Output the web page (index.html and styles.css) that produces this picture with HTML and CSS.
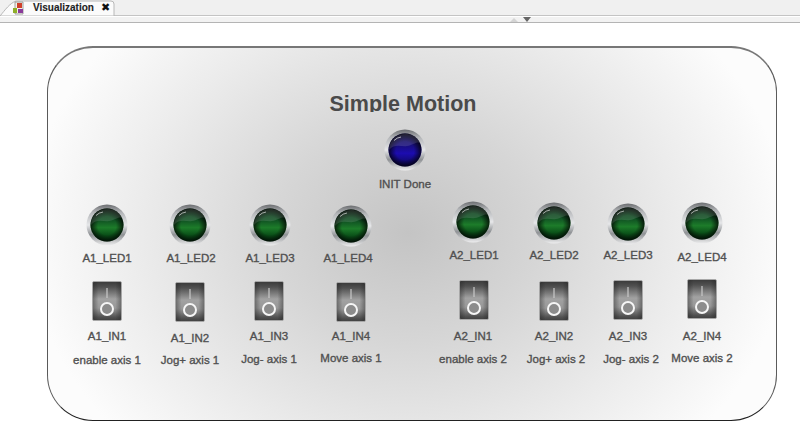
FILE: index.html
```html
<!DOCTYPE html>
<html lang="en">
<head>
<meta charset="utf-8">
<title>Visualization</title>
<link rel="stylesheet" href="styles.css">
</head>
<body>
<svg width="0" height="0" class="defs">
  <defs>
    <linearGradient id="bezel" x1="0" y1="0" x2="0" y2="1">
      <stop offset="0" stop-color="#6c6e71"/><stop offset=".2" stop-color="#b4b6b9"/><stop offset=".5" stop-color="#e6e7e9"/><stop offset=".74" stop-color="#8f9295"/><stop offset="1" stop-color="#eeeeef"/>
    </linearGradient>
    <linearGradient id="green" x1="0" y1="0" x2="0" y2="1">
      <stop offset="0" stop-color="#082c14"/><stop offset=".34" stop-color="#0f4f22"/><stop offset=".58" stop-color="#1d7c2a"/><stop offset=".8" stop-color="#0a5018"/><stop offset="1" stop-color="#052f10"/>
    </linearGradient>
    <linearGradient id="blue" x1="0" y1="0" x2="0" y2="1">
      <stop offset="0" stop-color="#0e0a50"/><stop offset=".34" stop-color="#180e78"/><stop offset=".6" stop-color="#1c0cb0"/><stop offset=".82" stop-color="#130a7c"/><stop offset="1" stop-color="#0c0650"/>
    </linearGradient>
    <radialGradient id="vign" cx=".5" cy=".52" r=".5">
      <stop offset=".55" stop-color="#000" stop-opacity="0"/><stop offset="1" stop-color="#000" stop-opacity=".75"/>
    </radialGradient>
    <linearGradient id="rocker" x1="0" y1="0" x2="0" y2="1">
      <stop offset="0" stop-color="#3a3a3a"/><stop offset=".14" stop-color="#505050"/><stop offset=".45" stop-color="#a2a2a2"/><stop offset=".68" stop-color="#989898"/><stop offset=".92" stop-color="#505050"/><stop offset="1" stop-color="#404040"/>
    </linearGradient>
    <linearGradient id="rocker-side" x1="0" y1="0" x2="1" y2="0">
      <stop offset="0" stop-color="#222" stop-opacity=".4"/><stop offset=".2" stop-color="#222" stop-opacity="0"/><stop offset=".8" stop-color="#222" stop-opacity="0"/><stop offset="1" stop-color="#222" stop-opacity=".4"/>
    </linearGradient>
    <symbol id="led-green" viewBox="0 0 42 42">
      <circle cx="21" cy="21" r="20.5" fill="url(#bezel)"/>
      <circle cx="21" cy="21" r="16.5" fill="url(#green)"/>
      <circle cx="21" cy="21" r="16.5" fill="url(#vign)"/>
      <path d="M5 21C11 14 17 18 23 17C29 16 33 12 36 14C33 7 27 5 21 5C12 5 5 12 5 21Z" fill="#fff" opacity=".13"/>
      <path d="M10 11.5Q13 8.5 17 8" stroke="#fff" stroke-width="1" fill="none" opacity=".6"/>
    </symbol>
    <symbol id="led-blue" viewBox="0 0 42 42">
      <circle cx="21" cy="21" r="20.5" fill="url(#bezel)"/>
      <circle cx="21" cy="21" r="16.5" fill="url(#blue)"/>
      <circle cx="21" cy="21" r="16.5" fill="url(#vign)"/>
      <path d="M5 21C11 14 17 18 23 17C29 16 33 12 36 14C33 7 27 5 21 5C12 5 5 12 5 21Z" fill="#fff" opacity=".13"/>
      <path d="M10 11.5Q13 8.5 17 8" stroke="#fff" stroke-width="1" fill="none" opacity=".65"/>
    </symbol>
    <symbol id="switch" viewBox="0 0 30 40">
      <rect x=".5" y=".5" width="29" height="39" rx="1.5" fill="url(#rocker)" stroke="#a8a8a8" stroke-width="1"/>
      <rect x="1" y="1" width="28" height="38" fill="url(#rocker-side)"/>
      <rect x="14.4" y="7" width="1.2" height="10" fill="#c8c8c8"/>
      <circle cx="15" cy="28" r="6" fill="#8c8c8c" stroke="#f6f6f6" stroke-width="2"/>
    </symbol>
  </defs>
</svg>
<header class="tabbar">
  <svg class="tab-shape" viewBox="0 0 116 16" width="116" height="16">
    <path d="M0 16C5 10 10 3 16 1H111Q114 1 114 4V16Z" fill="#fbfbfb" stroke="#b8b8b8" stroke-width="1"/>
  </svg>
  <div class="tab">
    <svg class="tab-icon" viewBox="0 0 14 14" width="14" height="14">
      <path d="M3 1H11V13H3Z" fill="#f4f1e8" stroke="#8a8a8a" stroke-width=".8"/>
      <rect x="1" y="7" width="4" height="5" fill="#8fae2a"/>
      <rect x="5" y="2" width="5" height="5" fill="#d0402a"/>
      <rect x="6" y="8" width="5" height="4" fill="#8a3a9a"/>
    </svg>
    <span class="tab-title">Visualization</span>
    <span class="tab-close">✖</span>
  </div>
</header>
<div class="splitter">
  <span class="arrow-up"></span>
  <span class="arrow-down"></span>
</div>
<main class="canvas">
  <section class="panel"></section>
  <h1 class="title">Simple Motion</h1>

  <svg class="led led-c"><use href="#led-blue"/></svg>
  <span class="lbl lbl-init">INIT Done</span>

  <svg class="led l1"><use href="#led-green"/></svg><span class="lbl t-l1">A1_LED1</span>
  <svg class="led l2"><use href="#led-green"/></svg><span class="lbl t-l2">A1_LED2</span>
  <svg class="led l3"><use href="#led-green"/></svg><span class="lbl t-l3">A1_LED3</span>
  <svg class="led l4"><use href="#led-green"/></svg><span class="lbl t-l4">A1_LED4</span>
  <svg class="led l5"><use href="#led-green"/></svg><span class="lbl t-l5">A2_LED1</span>
  <svg class="led l6"><use href="#led-green"/></svg><span class="lbl t-l6">A2_LED2</span>
  <svg class="led l7"><use href="#led-green"/></svg><span class="lbl t-l7">A2_LED3</span>
  <svg class="led l8"><use href="#led-green"/></svg><span class="lbl t-l8">A2_LED4</span>

  <svg class="sw s1"><use href="#switch"/></svg><span class="lbl t-s1">A1_IN1</span><span class="cap c1">enable axis 1</span>
  <svg class="sw s2"><use href="#switch"/></svg><span class="lbl t-s2">A1_IN2</span><span class="cap c2">Jog+ axis 1</span>
  <svg class="sw s3"><use href="#switch"/></svg><span class="lbl t-s3">A1_IN3</span><span class="cap c3">Jog- axis 1</span>
  <svg class="sw s4"><use href="#switch"/></svg><span class="lbl t-s4">A1_IN4</span><span class="cap c4">Move axis 1</span>
  <svg class="sw s5"><use href="#switch"/></svg><span class="lbl t-s5">A2_IN1</span><span class="cap c5">enable axis 2</span>
  <svg class="sw s6"><use href="#switch"/></svg><span class="lbl t-s6">A2_IN2</span><span class="cap c6">Jog+ axis 2</span>
  <svg class="sw s7"><use href="#switch"/></svg><span class="lbl t-s7">A2_IN3</span><span class="cap c7">Jog- axis 2</span>
  <svg class="sw s8"><use href="#switch"/></svg><span class="lbl t-s8">A2_IN4</span><span class="cap c8">Move axis 2</span>
</main>
</body>
</html>
```
FILE: styles.css
```css
html, body { margin: 0; padding: 0; width: 800px; height: 439px; overflow: hidden; background: #fff; font-family: "Liberation Sans", Arial, sans-serif; }
.defs { position: absolute; }
.tabbar { height: 15px; background: #f0f0f0; border-bottom: 1px solid #c4c4c4; position: relative; }
.tab-shape { position: absolute; left: 0; top: 0; }
.tab { position: absolute; left: 6px; top: 0; width: 108px; height: 15px; display: flex; align-items: center; padding-left: 6px; box-sizing: border-box; }
.tab-icon { flex: none; }
.tab-title { font-size: 10px; font-weight: bold; color: #222; margin-left: 7px; line-height: 15px; -webkit-text-stroke: .1px #222; }
.tab-close { font-size: 11px; color: #111; margin-left: 7px; line-height: 15px; }
.splitter { height: 5px; background: #f2f2f2; border-bottom: 1px solid #b4b4b4; position: relative; margin-top: 1px; }
.arrow-up { position: absolute; left: 510px; top: 1px; width: 0; height: 0; border-left: 4px solid transparent; border-right: 4px solid transparent; border-bottom: 4px solid #d4d4d4; }
.arrow-down { position: absolute; left: 523px; top: 0; width: 0; height: 0; border-left: 4px solid transparent; border-right: 4px solid transparent; border-top: 5px solid #666; }
.canvas { position: absolute; left: 0; top: 0; width: 800px; height: 439px; }
.panel { position: absolute; left: 47px; top: 46px; width: 730px; height: 375px; box-sizing: border-box; border: 1px solid #5a5a5a; border-top: 2px solid #777; border-bottom-color: #222; border-radius: 46px; background: radial-gradient(ellipse 380px 310px at 360px 185px, #c4c4c4 0%, #d6d6d6 35%, #ebebeb 70%, #fcfcfc 100%); }
.title { position: absolute; left: 303px; top: 92px; width: 200px; height: 20px; overflow: hidden; margin: 0; text-align: center; font-size: 21.5px; line-height: 24px; font-weight: bold; color: #4a4a4a; }
.led { position: absolute; width: 42px; height: 42px; }
.sw { position: absolute; width: 30px; height: 40px; }
.lbl, .cap { position: absolute; width: 100px; margin-left: -50px; text-align: center; color: #505050; font-size: 11.5px; line-height: 14px; white-space: nowrap; -webkit-text-stroke: .35px #505050; }
.led-c { left: 384px; top: 129px; }
.lbl-init { left: 405px; top: 177px; }
.l1 { left: 86px; top: 204px; } .t-l1 { left: 107px; top: 251px; }
.l2 { left: 169px; top: 204px; } .t-l2 { left: 191px; top: 251px; }
.l3 { left: 249px; top: 204px; } .t-l3 { left: 270px; top: 251px; }
.l4 { left: 330px; top: 205px; } .t-l4 { left: 348px; top: 251px; }
.l5 { left: 452px; top: 201px; } .t-l5 { left: 474px; top: 248px; }
.l6 { left: 533px; top: 202px; } .t-l6 { left: 554px; top: 248px; }
.l7 { left: 607px; top: 203px; } .t-l7 { left: 628px; top: 248px; }
.l8 { left: 681px; top: 202px; } .t-l8 { left: 702px; top: 250px; }
.s1 { left: 92px; top: 281px; } .t-s1 { left: 107px; top: 329px; } .c1 { left: 107px; top: 353px; }
.s2 { left: 175px; top: 282px; } .t-s2 { left: 190px; top: 331px; } .c2 { left: 190px; top: 353px; }
.s3 { left: 254px; top: 281px; } .t-s3 { left: 269px; top: 329px; } .c3 { left: 269px; top: 352px; }
.s4 { left: 336px; top: 282px; } .t-s4 { left: 351px; top: 329px; } .c4 { left: 351px; top: 351px; }
.s5 { left: 459px; top: 280px; } .t-s5 { left: 473px; top: 329px; } .c5 { left: 473px; top: 352px; }
.s6 { left: 539px; top: 281px; } .t-s6 { left: 554px; top: 329px; } .c6 { left: 556px; top: 352px; }
.s7 { left: 613px; top: 280px; } .t-s7 { left: 628px; top: 329px; } .c7 { left: 631px; top: 352px; }
.s8 { left: 687px; top: 279px; } .t-s8 { left: 702px; top: 329px; } .c8 { left: 702px; top: 351px; }
```
